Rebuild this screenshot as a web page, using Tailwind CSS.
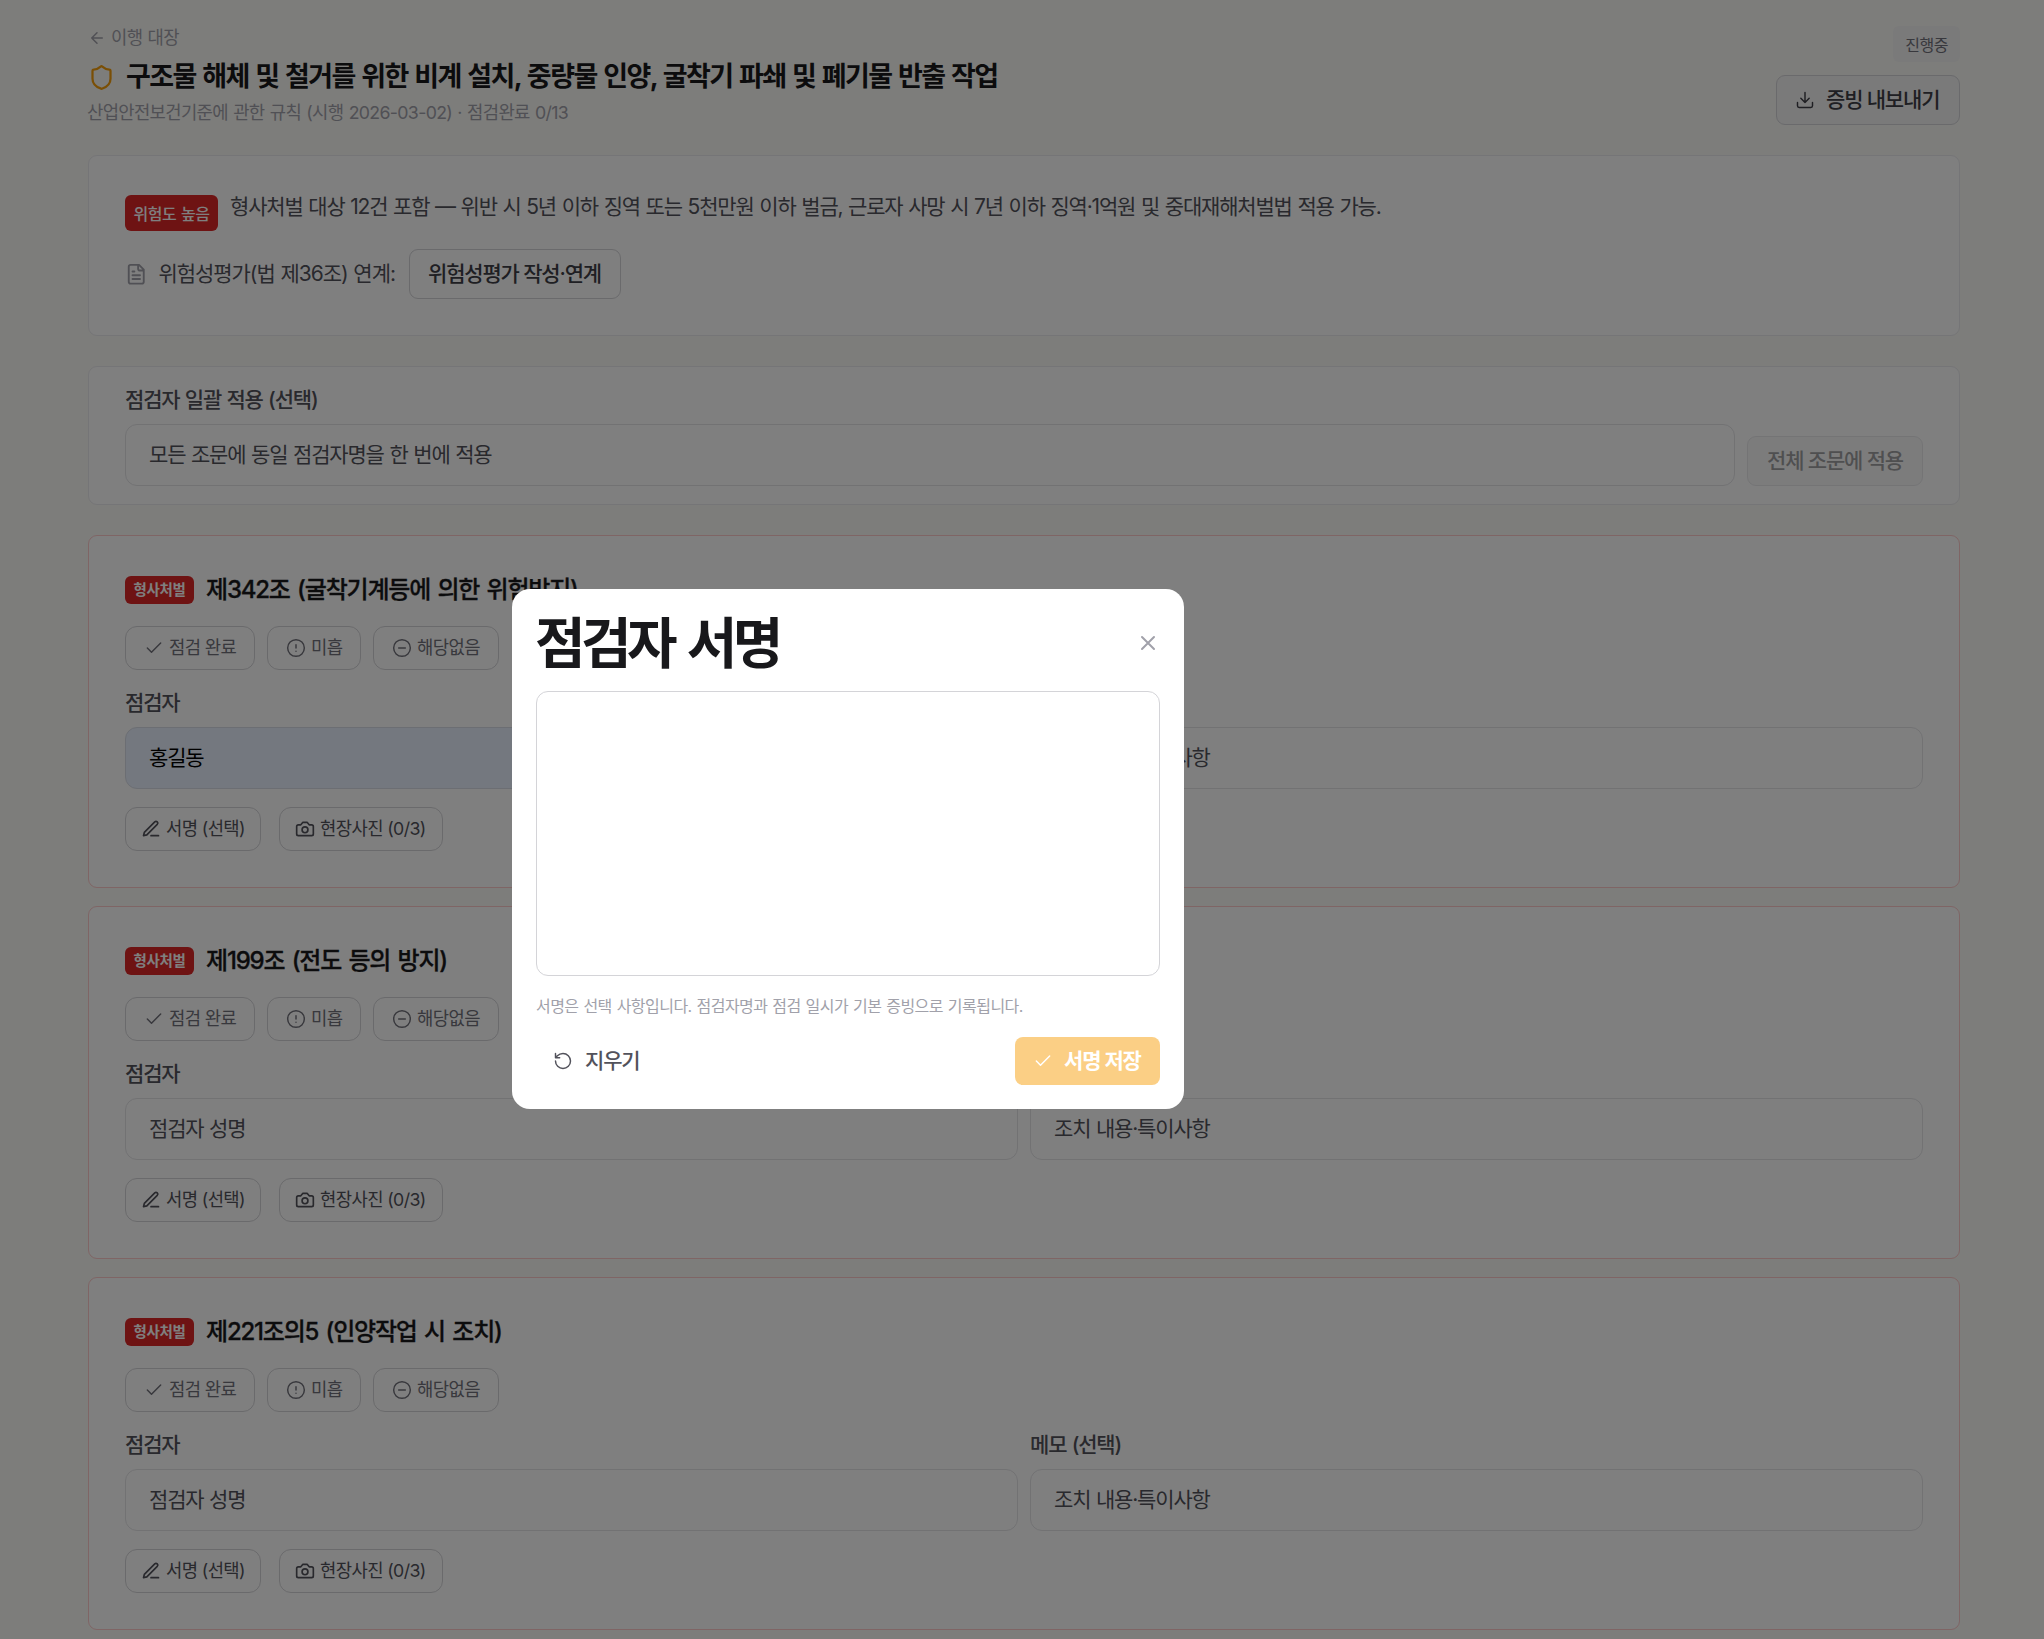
<!DOCTYPE html>
<html lang="ko">
<head>
  <meta charset="UTF-8">
  <title>이행 대장</title>
  <script src="https://cdn.jsdelivr.net/npm/@tailwindcss/browser@4"></script>
</head>
<body class="h-[1639px] overflow-hidden bg-[#fbfaf6] font-['Inter','Noto_Sans_CJK_KR',sans-serif] text-[21px] tracking-[-0.056em] text-[#18181b] [word-spacing:0.045em]">
  <!-- 아이콘 -->
  <svg class="hidden">
    <symbol id="check" viewBox="0 0 24 24"><path d="M20 6 9 17l-5-5" /></symbol>
    <symbol id="alert" viewBox="0 0 24 24"><circle cx="12" cy="12" r="10" /><path d="M12 8v4M12 16h.01" /></symbol>
    <symbol id="minus" viewBox="0 0 24 24"><circle cx="12" cy="12" r="10" /><path d="M8 12h8" /></symbol>
    <symbol id="pen" viewBox="0 0 24 24"><path d="M12 20h9" /><path d="M16.5 3.5a2.12 2.12 0 0 1 3 3L7 19l-4 1 1-4Z" /></symbol>
    <symbol id="camera" viewBox="0 0 24 24"><path d="M14.5 4h-5L7 7H4a2 2 0 0 0-2 2v9a2 2 0 0 0 2 2h16a2 2 0 0 0 2-2V9a2 2 0 0 0-2-2h-3Z" /><circle cx="12" cy="13" r="3.5" /></symbol>
  </svg>

  <main class="ml-[88px] w-[1872px] pt-[26px]">
    <header class="flex h-[129px] justify-between">
      <div>
        <a href="#" class="flex h-6 items-center gap-[5px] text-[17.75px] tracking-[-0.038em] text-[#a1a1aa]">
          <svg class="size-[18px] fill-none stroke-current stroke-2 [stroke-linecap:round] [stroke-linejoin:round]" viewBox="0 0 24 24"><path d="m12 19-7-7 7-7M19 12H5" /></svg>
          <span class="pt-px">이행 대장</span>
        </a>
        <h1 class="mt-[9px] flex h-9 items-center gap-[11px] text-[27px] font-bold tracking-[-0.058em] [word-spacing:0.06em]">
          <svg class="size-[27px] fill-none stroke-[#f59e0b] stroke-2 [stroke-linecap:round] [stroke-linejoin:round]" viewBox="0 0 24 24"><path d="M20 13c0 5-3.5 7.5-7.66 8.95a1 1 0 0 1-.67-.01C7.5 20.5 4 18 4 13V6a1 1 0 0 1 1-1c2 0 4.500-1.200 6.240-2.720a1.170 1.170 0 0 1 1.520 0C14.510 3.810 17 5 19 5a1 1 0 0 1 1 1z" /></svg>
          <span>구조물 해체 및 철거를 위한 비계 설치, 중량물 인양, 굴착기 파쇄 및 폐기물 반출 작업</span>
        </h1>
        <p class="mt-1.5 flex h-6 items-center text-[17.75px] tracking-[-0.038em] text-[#a1a1aa]"><span class="-ml-px pt-px">산업안전보건기준에 관한 규칙 (시행 2026-03-02) · 점검완료 0/13</span></p>
      </div>
      <div class="flex flex-col items-end gap-[13px]">
        <span class="flex h-9 items-center rounded-md bg-[#f4f4f5] px-3 text-base tracking-[-0.03em] text-[#71717a]"><span class="pt-px">진행중</span></span>
        <button class="flex h-[50px] w-[184px] items-center gap-[11px] rounded-[9px] border border-[#d4d4d8] bg-[#f4f4f5] pl-[18px] font-medium text-[#3f3f46]">
          <svg class="size-5 fill-none stroke-current stroke-[1.75] [stroke-linecap:round] [stroke-linejoin:round]" viewBox="0 0 24 24"><path d="M21 15v4a2 2 0 0 1-2 2H5a2 2 0 0 1-2-2v-4M7 10l5 5 5-5M12 15V3" /></svg>
          <span>증빙 내보내기</span>
        </button>
      </div>
    </header>

    <section class="h-[181px] rounded-[9px] border border-[#ebebee] bg-white px-9 pt-[39px]">
      <div class="flex gap-3">
        <span class="flex h-9 w-[93px] items-center justify-center rounded-md bg-[#dc2626] text-base font-medium tracking-[-0.03em] text-white"><span class="pt-px">위험도 높음</span></span>
        <p class="h-6 leading-6 text-[#52525b]">형사처벌 대상 12건 포함 — 위반 시 5년 이하 징역 또는 5천만원 이하 벌금, 근로자 사망 시 7년 이하 징역·1억원 및 중대재해처벌법 적용 가능.</p>
      </div>
      <div class="mt-[18px] flex h-[50px] items-center">
        <svg class="size-[22.5px] fill-none stroke-[#a1a1aa] stroke-2 [stroke-linecap:round] [stroke-linejoin:round]" viewBox="0 0 24 24"><path d="M15 2H6a2 2 0 0 0-2 2v16a2 2 0 0 0 2 2h12a2 2 0 0 0 2-2V7ZM14 2v4a2 2 0 0 0 2 2h4M10 9H8M16 13H8M16 17H8" /></svg>
        <span class="ml-[11px] w-[238px] whitespace-nowrap tracking-[-0.05em] text-[#52525b]">위험성평가(법 제36조) 연계:</span>
        <button class="ml-3 flex h-[50px] w-[212px] items-center justify-center rounded-[9px] border border-[#d4d4d8] font-medium text-[#3f3f46]">위험성평가 작성·연계</button>
      </div>
    </section>

    <section class="mt-[30px] flex h-[139px] items-end gap-3 rounded-[9px] border border-[#ebebee] bg-white px-9 pb-[18px]">
      <div class="flex-1">
        <label class="flex h-6 items-center font-medium text-[#52525b]">점검자 일괄 적용 (선택)</label>
        <div class="mt-3 flex h-[62px] items-center rounded-xl border border-[#e4e4e7] px-[23px] text-[#52525b]">모든 조문에 동일 점검자명을 한 번에 적용</div>
      </div>
      <button class="flex h-[50px] w-[176px] items-center justify-center rounded-[9px] border border-[#d4d4d8] bg-[#f4f4f5] font-medium text-[#3f3f46] opacity-50">전체 조문에 적용</button>
    </section>

    <div id="articles" class="mt-[30px] flex flex-col gap-[18px]"></div>
  </main>

  <div class="fixed inset-0 bg-black/50"></div>

  <!-- 서명 모달 -->
  <div class="absolute left-[512px] top-[589px] h-[520px] w-[672px] rounded-[18px] bg-white px-6 pt-6">
    <div class="flex h-[60px] items-center justify-between">
      <h2 class="-ml-px text-[55px] font-semibold leading-none tracking-[-0.083em] [word-spacing:0.08em]">점검자 서명</h2>
      <svg class="size-6 fill-none stroke-[#a1a1aa] stroke-2 [stroke-linecap:round]" viewBox="0 0 24 24"><path d="M18 6 6 18M6 6l12 12" /></svg>
    </div>
    <div class="mt-[18px] h-[285px] rounded-xl border border-[#d4d4d8]"></div>
    <p class="mt-[18px] flex h-6 items-center text-base tracking-[-0.034em] text-[#a1a1aa]">서명은 선택 사항입니다. 점검자명과 점검 일시가 기본 증빙으로 기록됩니다.</p>
    <div class="mt-[19px] flex h-12 items-center justify-between font-medium text-[#52525b]">
      <button class="flex items-center gap-3 pl-[17px]">
        <svg class="size-5 fill-none stroke-current stroke-[1.75] [stroke-linecap:round] [stroke-linejoin:round]" viewBox="0 0 24 24"><path d="M3 12a9 9 0 1 0 9-9 9.750 9.750 0 0 0-6.740 2.740L3 8M3 3v5h5" /></svg>
        <span>지우기</span>
      </button>
      <button class="flex h-12 w-[145px] items-center gap-[11px] rounded-lg bg-[#fbcf85] pl-[18px] font-semibold text-white">
        <svg class="size-5 fill-none stroke-current stroke-[1.75] [stroke-linecap:round] [stroke-linejoin:round]"><use href="#check" /></svg>
        <span>서명 저장</span>
      </button>
    </div>
  </div>

  <script>
    const articles = [
      { title: '제342조 (굴착기계등에 의한 위험방지)', name: '홍길동' },
      { title: '제199조 (전도 등의 방지)' },
      { title: '제221조의5 (인양작업 시 조치)' },
    ];

    document.getElementById('articles').innerHTML = articles.map(a => `
      <section class="h-[353px] rounded-[9px] border border-[#fecaca] bg-white px-9 pt-9">
        <div class="flex h-9 items-center gap-3">
          <span class="flex h-7 w-[69px] items-center justify-center rounded-md bg-[#dc2626] text-[14.5px] font-bold tracking-[-0.02em] text-white">형사처벌</span>
          <h3 class="text-[24px] font-medium tracking-[-0.05em] [-webkit-text-stroke:0.3px] [word-spacing:0.09em]">${a.title}</h3>
        </div>
        <div class="mt-[18px] flex gap-3 text-[17.75px] tracking-[-0.035em] text-[#71717a] [&_span]:pt-px">
          <button class="flex h-11 w-[130px] items-center gap-[5px] rounded-xl border border-[#d4d4d8] pl-[18px]"><svg class="size-5 fill-none stroke-current stroke-[1.75] [stroke-linecap:round] [stroke-linejoin:round]"><use href="#check" /></svg><span>점검 완료</span></button>
          <button class="flex h-11 w-[94px] items-center gap-[5px] rounded-xl border border-[#d4d4d8] pl-[18px]"><svg class="size-5 fill-none stroke-current stroke-[1.75] [stroke-linecap:round]"><use href="#alert" /></svg><span>미흡</span></button>
          <button class="flex h-11 w-[126px] items-center gap-[5px] rounded-xl border border-[#d4d4d8] pl-[18px]"><svg class="size-5 fill-none stroke-current stroke-[1.75] [stroke-linecap:round]"><use href="#minus" /></svg><span>해당없음</span></button>
        </div>
        <div class="mt-[21px] grid grid-cols-2 gap-3">
          <div>
            <label class="flex h-6 items-center font-medium text-[#52525b]">점검자</label>
            ${a.name
              ? `<div class="mt-3 flex h-[62px] items-center rounded-xl border border-[#d9dde6] bg-[#e8f0fe] px-[23px] text-black">${a.name}</div>`
              : `<div class="mt-3 flex h-[62px] items-center rounded-xl border border-[#e4e4e7] px-[23px] text-[#52525b]">점검자 성명</div>`}
          </div>
          <div>
            <label class="flex h-6 items-center font-medium text-[#52525b]">메모 (선택)</label>
            <div class="mt-3 flex h-[62px] items-center rounded-xl border border-[#e4e4e7] px-[23px] text-[#52525b]">조치 내용·특이사항</div>
          </div>
        </div>
        <div class="mt-[18px] flex gap-[18px] text-[17.75px] tracking-[-0.035em] text-[#52525b] [&_span]:pt-px">
          <button class="flex h-11 w-[136px] items-center gap-[5px] rounded-xl border border-[#d4d4d8] pl-[15px]"><svg class="size-5 fill-none stroke-current stroke-2 [stroke-linecap:round] [stroke-linejoin:round]"><use href="#pen" /></svg><span>서명 (선택)</span></button>
          <button class="flex h-11 w-[164px] items-center gap-[5px] rounded-xl border border-[#d4d4d8] pl-[15px]"><svg class="size-5 fill-none stroke-current stroke-2 [stroke-linecap:round] [stroke-linejoin:round]"><use href="#camera" /></svg><span>현장사진 (0/3)</span></button>
        </div>
      </section>`).join('');
  </script>
</body>
</html>
